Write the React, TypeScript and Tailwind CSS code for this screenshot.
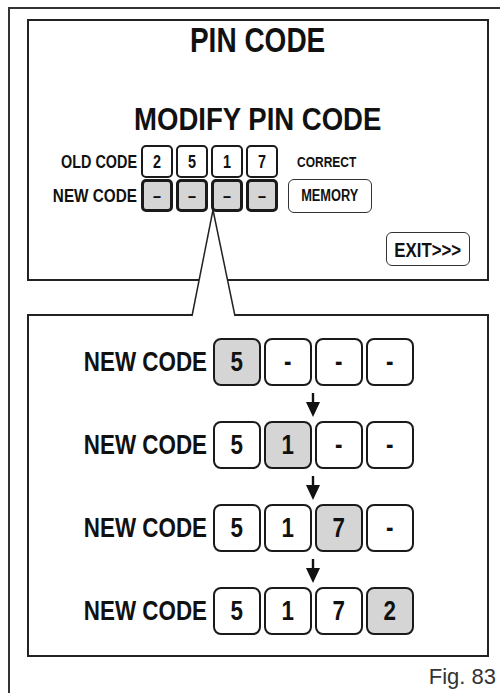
import type { ReactNode } from "react";

const narrow = "font-['Liberation_Sans',Arial,sans-serif] font-bold text-[#111]";

type Cell = { value: string; active?: boolean };

// no narrow font installed, so squeeze the bold sans
function N({
    children,
    origin = "origin-center",
    squeeze = "scale-x-[0.8]",
}: {
    children: ReactNode;
    origin?: string;
    squeeze?: string;
}) {
    return <span className={`inline-block ${squeeze} ${origin}`}>{children}</span>;
}

function SmallBox({ value, active }: Cell) {
    return (
        <div
            className={`w-[32px] h-[33px] flex items-center justify-center rounded-[5px] text-[18px] leading-none ${
                active
                    ? "bg-[#d5d5d5] border-[3px] border-[#1a1a1a]"
                    : "bg-white border-2 border-[#1a1a1a]"
            }`}
        >
            <N>{value}</N>
        </div>
    );
}

function BigBox({ value, active }: Cell) {
    return (
        <div
            className={`w-[48px] h-[48px] flex items-center justify-center rounded-[8px] border-2 border-[#1a1a1a] text-[28px] leading-none ${
                active ? "bg-[#d5d5d5]" : "bg-white"
            }`}
        >
            <N>{value}</N>
        </div>
    );
}

function Arrow() {
    return (
        <div className="h-[35px] pt-[7px]">
            <svg className="ml-[277px]" width="14" height="24" viewBox="0 0 14 24">
                <rect x="5.8" y="0" width="2.4" height="11" fill="#111" />
                <polygon points="0,9 14,9 7,24" fill="#111" />
            </svg>
        </div>
    );
}

const steps: Cell[][] = [
    [{ value: "5", active: true }, { value: "-" }, { value: "-" }, { value: "-" }],
    [{ value: "5" }, { value: "1", active: true }, { value: "-" }, { value: "-" }],
    [{ value: "5" }, { value: "1" }, { value: "7", active: true }, { value: "-" }],
    [{ value: "5" }, { value: "1" }, { value: "7" }, { value: "2", active: true }],
];

export default function App() {
    return (
        <div className={`relative w-[500px] h-[693px] bg-white overflow-hidden ${narrow}`}>
            <div className="ml-[8px] mt-[7px] w-[492px] h-[686px] border-t-2 border-l-2 border-[#333] pl-[17px] pt-[10px]">
                {/* screen */}
                <div className="w-[462px] h-[262px] border-2 border-[#222] flex flex-col">
                    <div className="mt-[1px] text-center text-[35px] leading-none">
                        <N>PIN CODE</N>
                    </div>
                    <div className="mt-[46px] text-center text-[32px] leading-none">
                        <N squeeze="scale-x-[0.86]">MODIFY PIN CODE</N>
                    </div>

                    <div className="mt-[10px] flex items-center">
                        <div className="w-[112px] pr-[4px] text-right text-[18px] leading-none">
                            <N origin="origin-right">OLD CODE</N>
                        </div>
                        <div className="flex gap-[3px]">
                            <SmallBox value="2" />
                            <SmallBox value="5" />
                            <SmallBox value="1" />
                            <SmallBox value="7" />
                        </div>
                        <div className="ml-[19px] text-[15px] leading-none">
                            <N origin="origin-left">CORRECT</N>
                        </div>
                    </div>
                    <div className="mt-[1px] flex items-start">
                        <div className="w-[112px] h-[33px] pr-[4px] flex items-center justify-end text-[18px] leading-none">
                            <N origin="origin-right" squeeze="scale-x-[0.85]">
                                NEW CODE
                            </N>
                        </div>
                        <div className="flex gap-[3px]">
                            <SmallBox value="–" active />
                            <SmallBox value="–" active />
                            <SmallBox value="–" active />
                            <SmallBox value="–" active />
                        </div>
                        <div className="ml-[10px] w-[84px] h-[34px] rounded-[6px] border-[1.5px] border-[#333] flex items-center justify-center text-[16px] leading-none">
                            <N>MEMORY</N>
                        </div>
                    </div>

                    <div className="mt-auto mb-[13px] pr-[17px] flex justify-end">
                        <div className="w-[84px] h-[34px] rounded-[6px] border-[1.5px] border-[#333] flex items-center justify-center text-[21px] leading-none">
                            <N>EXIT&gt;&gt;&gt;</N>
                        </div>
                    </div>
                </div>

                {/* zoomed sequence */}
                <div className="mt-[33px] w-[462px] h-[343px] border-2 border-[#222] pt-[22px]">
                    {steps.map((row, i) => (
                        <div key={i}>
                            <div className="flex items-center">
                                <div className="w-[184px] pr-[6px] text-right text-[28px] leading-none">
                                    <N origin="origin-right">NEW CODE</N>
                                </div>
                                <div className="flex gap-[3px]">
                                    {row.map((c, j) => (
                                        <BigBox key={j} value={c.value} active={c.active} />
                                    ))}
                                </div>
                            </div>
                            {i < steps.length - 1 && <Arrow />}
                        </div>
                    ))}
                </div>

                <div className="mt-[9px] pr-[4px] flex justify-end">
                    <span className="font-normal text-[22px] leading-none text-[#333]">Fig. 83</span>
                </div>
            </div>

            {/* callout pointer */}
            <svg className="absolute left-0 top-0 pointer-events-none" width="500" height="693">
                <polygon points="213,211 192,315 192,319 235,319 235,315" fill="#fff" />
                <line x1="213" y1="210" x2="192" y2="316" stroke="#222" strokeWidth="1.5" />
                <line x1="213" y1="210" x2="235" y2="316" stroke="#222" strokeWidth="1.5" />
            </svg>
        </div>
    );
}
